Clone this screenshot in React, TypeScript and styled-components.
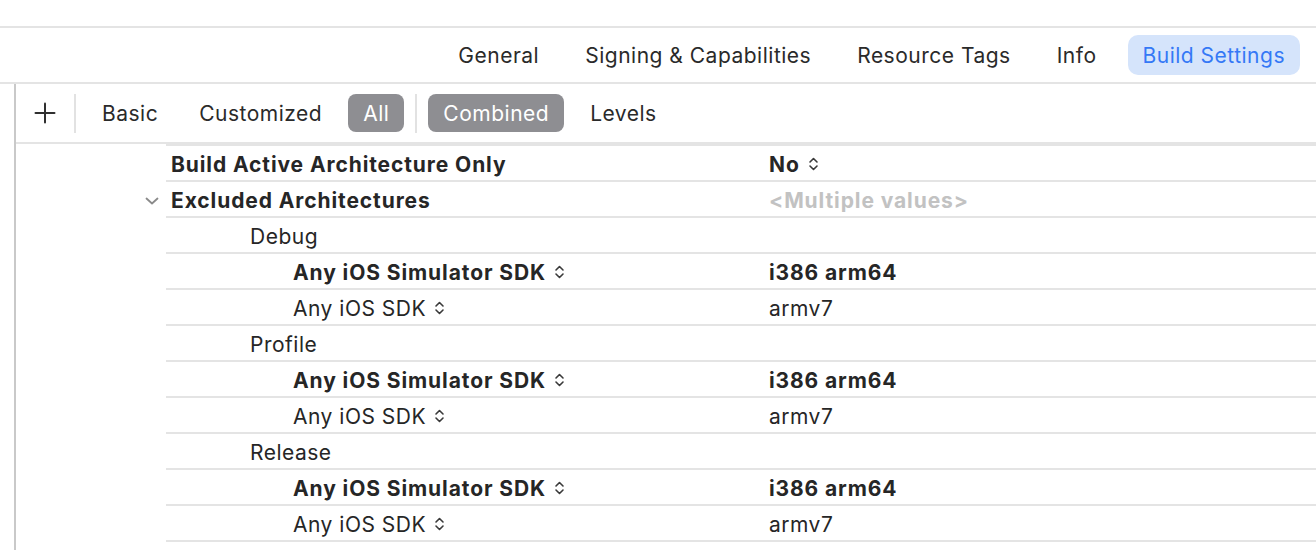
import React from 'react'
import styled, { createGlobalStyle } from 'styled-components'

const GlobalStyle = createGlobalStyle`
    html, body {
        margin: 0;
        padding: 0;
        background: #ffffff;
    }
    body {
        font-family: Inter, "Noto Sans", "Liberation Sans", sans-serif;
        color: #262626;
        -webkit-font-smoothing: antialiased;
    }
`

const Page = styled.div`
    width: 1316px;
    height: 550px;
    overflow: hidden;
    padding-top: 26px;
    box-sizing: border-box;
    display: flex;
    flex-direction: column;
`

const TabBar = styled.div`
    height: 54px;
    border-top: 2px solid #e4e4e4;
    border-bottom: 2px solid #e4e4e4;
    display: flex;
    justify-content: flex-end;
    align-items: center;
    gap: 16px;
    padding-right: 16px;
`

const Tab = styled.div<{ $active?: boolean }>`
    height: 40px;
    padding: 0 15px;
    border-radius: 10px;
    display: flex;
    align-items: center;
    font-size: 21px;
    letter-spacing: 0.5px;
    color: ${(p) => (p.$active ? '#3478f6' : '#2a2a2a')};
    background: ${(p) => (p.$active ? '#d5e4fb' : 'transparent')};
`

const Body = styled.div`
    flex: 1;
    margin-left: 14px;
    border-left: 2px solid #c9c9c9;
`

const Toolbar = styled.div`
    height: 58px;
    border-bottom: 2px solid #e4e4e4;
    display: flex;
    align-items: center;
    padding-left: 5px;
    gap: 11px;
`

const PlusButton = styled.div`
    width: 42px;
    height: 38px;
    margin-left: 3px;
    margin-right: -3px;
    display: flex;
    align-items: center;
    justify-content: center;
`

const Divider = styled.div`
    width: 2px;
    height: 39px;
    background: #e2e2e2;
`

const Segment = styled.div<{ $selected?: boolean }>`
    height: 38px;
    padding: 0 15px;
    border-radius: 8px;
    display: flex;
    align-items: center;
    font-size: 21px;
    letter-spacing: 0.5px;
    color: ${(p) => (p.$selected ? '#ffffff' : '#2a2a2a')};
    background: ${(p) => (p.$selected ? '#8e8e92' : 'transparent')};
`

const Table = styled.div`
    margin-left: 120px;
    display: flex;
    flex-direction: column;
`

const Row = styled.div`
    display: flex;
    &:first-child > div:last-child {
        border-top: 2px solid #e4e4e4;
    }
`

const Gutter = styled.div`
    width: 30px;
    display: flex;
    align-items: center;
    padding-left: 9px;
    padding-top: 2px;
    box-sizing: border-box;
`

const Cells = styled.div`
    flex: 1;
    height: 32px;
    padding-top: 2px;
    border-bottom: 2px solid #e4e4e4;
    display: grid;
    grid-template-columns: 603px 1fr;
    align-items: center;
`

const NameCell = styled.div<{ $indent: number; $bold?: boolean }>`
    padding-left: ${(p) => 5 + p.$indent}px;
    font-size: 21px;
    font-weight: ${(p) => (p.$bold ? 700 : 400)};
    letter-spacing: ${(p) => (p.$bold ? '0.9px' : '0.5px')};
    display: flex;
    align-items: center;
    gap: 8px;
    white-space: nowrap;
`

const ValueCell = styled.div<{ $bold?: boolean; $muted?: boolean }>`
    font-size: 21px;
    font-weight: ${(p) => (p.$bold ? 700 : 400)};
    color: ${(p) => (p.$muted ? '#c2c2c2' : '#262626')};
    letter-spacing: ${(p) => (p.$bold ? '0.9px' : '0.5px')};
    display: flex;
    align-items: center;
    gap: 8px;
    white-space: nowrap;
`

const Stepper = () => (
    <svg width="11" height="18" viewBox="0 0 11 18" fill="none" stroke="#3a3a3a" strokeWidth="1.6" strokeLinecap="round" strokeLinejoin="round">
        <path d="M2 7 L5.5 3.5 L9 7" />
        <path d="M2 11 L5.5 14.5 L9 11" />
    </svg>
)

const Disclosure = () => (
    <svg width="14" height="10" viewBox="0 0 14 10" fill="none" stroke="#8a8a8a" strokeWidth="1.8" strokeLinecap="round" strokeLinejoin="round">
        <path d="M1.5 2.5 L7 7.5 L12.5 2.5" />
    </svg>
)

const Plus = () => (
    <svg width="22" height="22" viewBox="0 0 22 22" stroke="#2f2f2f" strokeWidth="2" strokeLinecap="round">
        <path d="M11 1.5 V20.5" />
        <path d="M1.5 11 H20.5" />
    </svg>
)

type Setting = {
    name: string
    indent: number
    bold?: boolean
    stepper?: boolean
    expanded?: boolean
    value?: string
    valueBold?: boolean
    valueStepper?: boolean
    muted?: boolean
}

const settings: Setting[] = [
    { name: 'Build Active Architecture Only', indent: 0, bold: true, value: 'No', valueBold: true, valueStepper: true },
    { name: 'Excluded Architectures', indent: 0, bold: true, expanded: true, value: '<Multiple values>', valueBold: true, muted: true },
    { name: 'Debug', indent: 79 },
    { name: 'Any iOS Simulator SDK', indent: 122, bold: true, stepper: true, value: 'i386 arm64', valueBold: true },
    { name: 'Any iOS SDK', indent: 122, stepper: true, value: 'armv7' },
    { name: 'Profile', indent: 79 },
    { name: 'Any iOS Simulator SDK', indent: 122, bold: true, stepper: true, value: 'i386 arm64', valueBold: true },
    { name: 'Any iOS SDK', indent: 122, stepper: true, value: 'armv7' },
    { name: 'Release', indent: 79 },
    { name: 'Any iOS Simulator SDK', indent: 122, bold: true, stepper: true, value: 'i386 arm64', valueBold: true },
    { name: 'Any iOS SDK', indent: 122, stepper: true, value: 'armv7' },
]

const tabs = ['General', 'Signing & Capabilities', 'Resource Tags', 'Info', 'Build Settings']

function App() {
    return (
        <Page>
            <GlobalStyle />
            <TabBar>
                {tabs.map((t) => (
                    <Tab key={t} $active={t === 'Build Settings'}>{t}</Tab>
                ))}
            </TabBar>
            <Body>
                <Toolbar>
                    <PlusButton><Plus /></PlusButton>
                    <Divider />
                    <Segment>Basic</Segment>
                    <Segment>Customized</Segment>
                    <Segment $selected>All</Segment>
                    <Divider />
                    <Segment $selected>Combined</Segment>
                    <Segment>Levels</Segment>
                </Toolbar>
                <Table>
                    {settings.map((s, i) => (
                        <Row key={i}>
                            <Gutter>{s.expanded && <Disclosure />}</Gutter>
                            <Cells>
                                <NameCell $indent={s.indent} $bold={s.bold}>
                                    {s.name}
                                    {s.stepper && <Stepper />}
                                </NameCell>
                                <ValueCell $bold={s.valueBold} $muted={s.muted}>
                                    {s.value}
                                    {s.valueStepper && <Stepper />}
                                </ValueCell>
                            </Cells>
                        </Row>
                    ))}
                </Table>
            </Body>
        </Page>
    )
}

export default App
